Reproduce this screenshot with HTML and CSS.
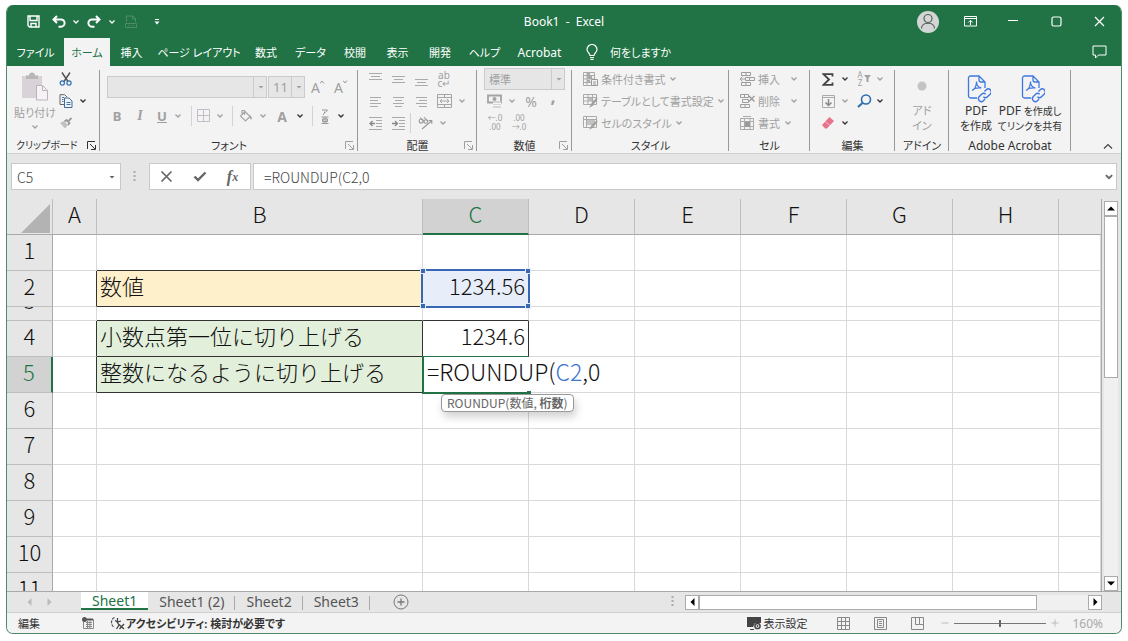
FILE: index.html
```html
<!DOCTYPE html>
<html lang="ja">
<head>
<meta charset="utf-8">
<title>Book1 - Excel</title>
<link rel="stylesheet" href="styles.css">
</head>
<body>
<svg class="sprite" aria-hidden="true">
  <symbol id="chev" viewBox="0 0 8 8"><path d="M1.500 2.500 4 5l2.500-2.500" fill="none" stroke="currentColor" stroke-width="1.300"/></symbol>
  <symbol id="tri" viewBox="0 0 8 8"><path d="M1.500 3h5L4 5.500z" fill="currentColor"/></symbol>
  <symbol id="launch" viewBox="0 0 9 9"><path d="M.5 8V.5H8M3 3l5 5M8.500 4v4.500H4" fill="none" stroke="currentColor"/></symbol>
  <symbol id="pdf" viewBox="0 0 26 28"><g fill="none" stroke="#3f78e0" stroke-width="1.300"><path d="M10 23H3.500A2 2 0 0 1 1.500 21V3A2 2 0 0 1 3.500 1H12l6 6v6M12 1v4a2 2 0 0 0 2 2h4"/><path d="M5 15.500c3-1.500 4.500-4.500 4.500-9M9.500 6.500c0 3.500 2 6 5 6.500M5 15.500c2-2.500 5.500-3 9.500-2.500" stroke-width="1.200"/><path d="m17.500 16.500 1.700-1.700a2.900 2.900 0 0 1 4.100 4.100l-2.800 2.800a2.900 2.900 0 0 1-4.100 0M18.700 19.300a2.900 2.900 0 0 0-4.100 0l-2.300 2.300a2.900 2.900 0 0 0 4.100 4.100l1.600-1.600" stroke-width="1.400"/></g></symbol>
</svg>

<div class="window">
  <header class="titlebar">
    <div class="quick">
      <button aria-label="上書き保存"><svg width="13" height="13" viewBox="0 0 13 13"><path d="M1 1h11v11H2.500L1 10.500zM3 1v4.500h7V1M4 12V8.500h5V12" fill="none" stroke="#fff" stroke-width="1.400"/></svg></button>
      <button aria-label="元に戻す"><svg width="14" height="13" viewBox="0 0 14 13"><path d="M5 1 1.500 4.500 5 8M1.500 4.500H9a3.600 3.600 0 0 1 0 7.200H6.500" fill="none" stroke="#fff" stroke-width="2"/></svg></button>
      <button aria-label="元に戻すの一覧"><svg width="8" height="8"><use href="#chev"/></svg></button>
      <button aria-label="やり直し"><svg width="14" height="13" viewBox="0 0 14 13"><path d="M9 1l3.500 3.500L9 8M12.500 4.500H5a3.600 3.600 0 0 0 0 7.200h2.500" fill="none" stroke="#fff" stroke-width="2"/></svg></button>
      <button aria-label="やり直しの一覧"><svg width="8" height="8"><use href="#chev"/></svg></button>
      <button aria-label="PDF"><svg width="12" height="14" viewBox="0 0 12 14"><path d="M1.500 7V1H8l2.500 2.500V7M7.500 1v3h3M.5 8.500h11v4H.5zM3 10.500h1m1.500 0h1M8 10.500h1" fill="none" stroke="#4c8c69"/></svg></button>
      <button aria-label="ツールバーのカスタマイズ"><svg width="8" height="8" viewBox="0 0 8 8"><path d="M2 1.500h4" stroke="#fff"/><path d="M1.500 3.500h5L4 6.500z" fill="#fff"/></svg></button>
    </div>
    <h1 class="title">Book1&nbsp; -&nbsp; Excel</h1>
    <div class="wincontrols">
      <button class="avatar" aria-label="アカウント"><svg width="22" height="22" viewBox="0 0 22 22"><circle cx="11" cy="11" r="11" fill="#d3d6d4"/><circle cx="11" cy="7.500" r="4" fill="none" stroke="#56605a" stroke-width="1.200"/><path d="M4.500 17.500c0-7 13-7 13 0" fill="none" stroke="#56605a" stroke-width="1.200"/></svg></button>
      <button aria-label="リボンの表示オプション"><svg width="13" height="11" viewBox="0 0 13 11"><path d="M.5.5h12v9.500H.5zM.5 2.500h12M6.500 9V4.500M4.300 6.500l2.200-2.200 2.200 2.200" fill="none" stroke="#fff"/></svg></button>
      <button aria-label="最小化"><svg width="11" height="11"><path d="M0 4.500h10" stroke="#fff"/></svg></button>
      <button aria-label="最大化"><svg width="11" height="11"><rect x="1" y="1" width="9" height="9" rx="1.500" fill="none" stroke="#fff" stroke-width="1.200"/></svg></button>
      <button aria-label="閉じる"><svg width="11" height="11"><path d="m1 1 9 9m0-9-9 9" stroke="#fff" stroke-width="1.200"/></svg></button>
    </div>
  </header>

  <nav class="tabs">
    <button>ファイル</button><button class="active">ホーム</button><button>挿入</button><button>ページ レイアウト</button><button>数式</button><button>データ</button><button>校閲</button><button>表示</button><button>開発</button><button>ヘルプ</button><button class="latin">Acrobat</button>
    <button class="tellme"><svg width="12" height="16" viewBox="0 0 12 16"><path d="M4 11.500C4 9 1 8.500 1 5.500a5 5 0 0 1 10 0c0 3-3 3.500-3 6zM4 13.500h4M4.500 15.300h3" fill="none" stroke="#fff" stroke-width="1.200"/></svg>何をしますか</button>
    <button class="comment" aria-label="コメント"><svg width="15" height="14" viewBox="0 0 15 14"><path d="M1 1h13v9H6.500L3.500 13v-3H1z" fill="none" stroke="#fff"/></svg></button>
  </nav>

  <section class="ribbon" aria-label="リボン">
    <div class="group g-clip">
      <div class="body">
        <button class="tall"><svg width="28" height="32" viewBox="0 0 28 32"><path d="M1 5h20v22H1z" fill="#d9d3d9"/><path d="M5 4.500h3c0-4 6-4 6 0h3V8H5z" fill="#b7b7b7"/><path d="M15.500 14.500h6l5 5V29h-11z" fill="#f6f3f6" stroke="#b9b4b9"/><path d="M21.500 14.500v5h5" fill="none" stroke="#b9b4b9"/></svg><span>貼り付け</span><svg width="8" height="8"><use href="#chev"/></svg></button>
        <div class="rows">
          <div><button aria-label="切り取り"><svg width="14" height="14" viewBox="0 0 14 14"><path d="m3 .5 6 9M11 .5 5 9.500" stroke="#555" stroke-width="1.500"/><circle cx="3.300" cy="11" r="2.100" fill="none" stroke="#2f6fb3" stroke-width="1.200"/><circle cx="10" cy="11" r="2.100" fill="none" stroke="#2f6fb3" stroke-width="1.200"/></svg></button></div>
          <div><button aria-label="コピー"><svg width="14" height="14" viewBox="0 0 14 14"><path d="M6 10.500H1V.7h4.500L8 3" fill="none" stroke="#666"/><path d="M5.500 4h4.500l3 3v6.500H5.500z" fill="#eef4fb" stroke="#47698e"/><path d="M3 3.500h2M3 5.500h1.500M3 7.500h1.500M7.500 8.500h4M7.500 10.500h4" stroke="#3877b8"/></svg></button><button class="dk" aria-label="コピーの一覧"><svg width="8" height="8"><use href="#chev"/></svg></button></div>
          <div><button aria-label="書式のコピー"><svg width="14" height="12" viewBox="0 0 14 12"><path d="m1 6 4-2 4 4-3 3.500z" fill="#c4bfc4"/><path d="m5.500 4.500 2-1.500 3 3-1.500 2M9 4.500l3.500-3.500" fill="none" stroke="#9b9b9b" stroke-width="1.800"/></svg></button></div>
        </div>
      </div>
      <h2>クリップボード</h2><svg class="launch dk" width="9" height="9"><use href="#launch"/></svg>
    </div>

    <div class="group g-font">
      <div class="body">
        <div class="fontrow1">
          <span class="combo"><select aria-label="フォント"><option></option></select><svg width="8" height="8"><use href="#tri"/></svg></span>
          <span class="combo"><select aria-label="フォント サイズ"><option>11</option></select><svg width="8" height="8"><use href="#tri"/></svg></span>
          <button class="big" aria-label="拡大">A<svg width="5" height="4"><path d="m0 3.500 2-2.500 2 2.500" stroke="#9b9b9b" fill="none"/></svg></button>
          <button class="big" aria-label="縮小">A<svg width="5" height="4"><path d="m0 .5 2 2.500L4 .5" stroke="#9b9b9b" fill="none"/></svg></button>
        </div>
        <div class="fontrow2">
          <button><b>B</b></button><button><i>I</i></button><button><u>U</u></button>
          <button aria-label="下線の種類"><svg width="8" height="8"><use href="#chev"/></svg></button><span class="sep"></span>
          <button aria-label="罫線"><svg width="14" height="14"><path d="M.5.5h12v12H.5zM6.500.5v12M.5 6.500h12" fill="none" stroke="#c6bcc9"/></svg></button>
          <button aria-label="罫線の種類"><svg width="8" height="8"><use href="#chev"/></svg></button><span class="sep"></span>
          <button aria-label="塗りつぶし"><svg width="14" height="14" viewBox="0 0 14 14"><path d="m6 2.500 5 5-4.500 4.500-5-5zM3 5V1.500h2.500V6" fill="none" stroke="#a5a5a5" stroke-width="1.200"/><path d="M11 6c2 2 2.500 4 1.200 4.500S10.500 8 11 6z" fill="#a5a5a5"/></svg></button>
          <button aria-label="塗りつぶしの色"><svg width="8" height="8"><use href="#chev"/></svg></button>
          <button><b class="fontcolor">A</b></button>
          <button class="dk" aria-label="文字の色"><svg width="8" height="8"><use href="#chev"/></svg></button><span class="sep"></span>
          <button aria-label="ふりがな"><svg width="8" height="15" viewBox="0 0 8 15"><path d="M1 1h5.500L4.500 3.500M3.500 2.500v1.500L2 6M.5 8h7M.5 14.500h7M1.500 10h5v2.500h-5zM3 8v6M5 8v6" fill="none" stroke="#999"/></svg></button>
          <button class="dk" aria-label="ふりがなの設定"><svg width="8" height="8"><use href="#chev"/></svg></button>
        </div>
      </div>
      <h2>フォント</h2><svg class="launch" width="9" height="9"><use href="#launch"/></svg>
    </div>

    <div class="group g-align">
      <div class="body">
        <button aria-label="上揃え"><svg width="13" height="13"><path d="M0 .5h13M2 3.500h9M0 6.500h13" stroke="#aaa"/></svg></button>
        <button aria-label="上下中央揃え"><svg width="13" height="13"><path d="M0 3.500h13M2 6.500h9M0 9.500h13" stroke="#aaa"/></svg></button>
        <button aria-label="下揃え"><svg width="13" height="13"><path d="M0 6.500h13M2 9.500h9M0 12.500h13" stroke="#aaa"/></svg></button>
        <button class="wrap">ab<br>c↵</button><span></span>
        <button aria-label="左揃え"><svg width="13" height="13"><path d="M1 2.500h11M1 5.500h8M1 8.500h11M1 11.500h8" stroke="#aaa"/></svg></button>
        <button aria-label="中央揃え"><svg width="13" height="13"><path d="M1 2.500h11M3 5.500h7M1 8.500h11M3 11.500h7" stroke="#aaa"/></svg></button>
        <button aria-label="右揃え"><svg width="13" height="13"><path d="M1 2.500h11M4 5.500h8M1 8.500h11M4 11.500h8" stroke="#aaa"/></svg></button>
        <button aria-label="セルを結合"><svg width="15" height="14"><path d="M.5.5h14v13H.5zM.5 3.500h14M.5 10.500h14M7.500.5v3M7.500 10.500v3M3 7h9M5 5 3 7l2 2M10 5l2 2-2 2" fill="none" stroke="#a5a5a5"/></svg></button>
        <button aria-label="結合の種類"><svg width="8" height="8"><use href="#chev"/></svg></button>
        <button aria-label="インデントを減らす"><svg width="14" height="13"><path d="M0 .5h13M7 3.500h6M7 6.500h6M7 9.500h6M0 12.500h13" fill="none" stroke="#aaa"/><path d="M1 6.500h5M3.500 4 1 6.500 3.500 9" fill="none" stroke="#888" stroke-width="1.300"/></svg></button>
        <button aria-label="インデントを増やす"><svg width="14" height="13"><path d="M0 .5h13M7 3.500h6M7 6.500h6M7 9.500h6M0 12.500h13" fill="none" stroke="#aaa"/><path d="M0 6.500h5M3 4l2.500 2.500L3 9" fill="none" stroke="#888" stroke-width="1.300"/></svg></button>
        <div class="orient"><span class="sep"></span><button aria-label="方向"><svg width="15" height="14" viewBox="0 0 15 14"><g fill="none" stroke="#999" stroke-width="1.100"><circle cx="3.200" cy="5" r="2"/><path d="M2 1.500 6 6M6 1l4 4.500"/><circle cx="7.800" cy="5.500" r="1.800"/><path d="m4 13 9.500-8M10.500 4.500h3.300v3.300"/></g></svg></button><button aria-label="方向の種類"><svg width="8" height="8"><use href="#chev"/></svg></button></div>
      </div>
      <h2>配置</h2><svg class="launch" width="9" height="9"><use href="#launch"/></svg>
    </div>

    <div class="group g-num">
      <div class="body">
        <span class="combo"><select aria-label="表示形式"><option>標準</option></select><svg width="8" height="8"><use href="#tri"/></svg></span>
        <div class="numrow"><button aria-label="通貨"><svg width="15" height="14" viewBox="0 0 15 14"><path d="M1 1.500h13v7H1z" fill="none" stroke="#a3a3a3" stroke-width="1.800"/><circle cx="7.500" cy="5" r="2" fill="#a3a3a3"/><path d="M6 7h8v7H6z" fill="#d9d2d9"/><path d="M6 9.500h8M6 11.500h8" stroke="#f5f5f5"/></svg></button><button aria-label="通貨の種類"><svg width="8" height="8"><use href="#chev"/></svg></button><button class="pct">%</button><button class="comma">,</button></div>
        <div class="numrow dec"><button><span>←.0<br>.00</span></button><button><span>.00<br>→.0</span></button></div>
      </div>
      <h2>数値</h2><svg class="launch" width="9" height="9"><use href="#launch"/></svg>
    </div>

    <div class="group g-style">
      <div class="body">
        <button class="cmd"><svg width="15" height="15"><path d="M.5.5h11v13H.5zM.5 3.500h11M.5 7h11M.5 10.500h11M4 .5v13" fill="none" stroke="#aaa"/><path d="M4 1h3v3H4zM4 4h5v3H4zM4 8h3v2H4z" fill="#aaa"/><path d="M8.500 7.500h6v6h-6zM10 10h3M10 12h3" fill="#f3f3f3" stroke="#999"/></svg>条件付き書式<svg width="8" height="8"><use href="#chev"/></svg></button>
        <button class="cmd"><svg width="15" height="15"><path d="M.5.5h13v10H.5zM.5 3.500h13M.5 7h13M5 .5v10M9.500.5v10" fill="none" stroke="#aaa"/><path d="M5 4h4v3H5z" fill="#bbb"/><path d="m14 3-5.500 6L6 14l4-2.500L14.500 5z" fill="#a1a1a1"/></svg>テーブルとして書式設定<svg width="8" height="8"><use href="#chev"/></svg></button>
        <button class="cmd"><svg width="15" height="15"><path d="M.5.5h13v11H.5zM.5 3.500h13M3.500.5v11" fill="none" stroke="#aaa"/><path d="M4 4h8v5H4z" fill="#c2c2c2"/><path d="m14 4-5.500 5L6 14l4-2.500L14.500 6z" fill="#a1a1a1"/></svg>セルのスタイル<svg width="8" height="8"><use href="#chev"/></svg></button>
      </div>
      <h2>スタイル</h2>
    </div>

    <div class="group g-cell">
      <div class="body">
        <button class="cmd"><svg width="15" height="15"><path d="M1.500.5h9v3h-9zM6 .5v3M5.500 5.500h9v3h-9zM9.500 5.500v3M5.500 7H0M2.500 4.500 0 7l2.500 2.500M1.500 10.500h9v3h-9zM6 10.500v3" fill="none" stroke="#9d9d9d"/></svg><span>挿入</span><svg width="8" height="8"><use href="#chev"/></svg></button>
        <button class="cmd"><svg width="15" height="15"><path d="M.5.5h8v3h-8zM4.500.5v3M2.500 5.500h6v3h-6zM.5 10.500h9v3h-9zM5 10.500v3" fill="none" stroke="#9d9d9d"/><path d="m9 2 5.500 5.500m0-5.500L9 7.500" stroke="#999" stroke-width="1.400"/></svg><span>削除</span><svg width="8" height="8"><use href="#chev"/></svg></button>
        <button class="cmd close"><svg width="15" height="15"><path d="M.5 2.500h13v11H.5zM.5 5.500h13M.5 10.500h13M4.500 2.500v11M10 2.500v11M3 .5h8" fill="none" stroke="#aaa"/><path d="M5 6h5v5H5z" fill="#999"/></svg><span>書式</span><svg width="8" height="8"><use href="#chev"/></svg></button>
      </div>
      <h2>セル</h2>
    </div>

    <div class="group g-edit">
      <div class="body">
        <button aria-label="合計"><svg width="12" height="13" viewBox="0 0 12 13"><path d="M10.500 3.500V1.200H1.500L7 6.500l-5.500 5.300h9V9.500" fill="none" stroke="#444" stroke-width="1.800"/></svg></button><button class="dk" aria-label="合計の種類"><svg width="8" height="8"><use href="#chev"/></svg></button>
        <button class="az"><span>A<br>Z</span><svg width="7" height="8"><path d="M0 0h7L4.500 3v4h-2V3z" fill="#a1a1a1"/></svg></button><button aria-label="並べ替え"><svg width="8" height="8"><use href="#chev"/></svg></button>
        <button aria-label="フィル"><svg width="13" height="13"><path d="M.5.5h12v12H.5zM.5 2.500h12" fill="none" stroke="#aaa"/><path d="M6.500 4v6.500M3.500 7.500l3 3 3-3" fill="none" stroke="#888" stroke-width="1.500"/></svg></button><button aria-label="フィルの種類"><svg width="8" height="8"><use href="#chev"/></svg></button>
        <button aria-label="検索と選択"><svg width="15" height="14"><circle cx="9" cy="5.500" r="4.500" fill="none" stroke="#2d6cae" stroke-width="1.600"/><path d="M5.500 9 1 13" stroke="#2d6cae" stroke-width="2"/></svg></button><button class="dk" aria-label="検索の種類"><svg width="8" height="8"><use href="#chev"/></svg></button>
        <button aria-label="クリア"><svg width="14" height="14"><path d="m8.500 1 4.500 4L6 12.500H4L1 9z" fill="#e6738b"/><path d="m4 5.500 5 4" stroke="#f6b4c0"/></svg></button><button class="dk" aria-label="クリアの種類"><svg width="8" height="8"><use href="#chev"/></svg></button>
      </div>
      <h2>編集</h2>
    </div>

    <div class="group g-addin">
      <div class="body"><button class="tall"><svg width="28" height="32"><circle cx="14" cy="15" r="4.500" fill="#c4c4c4"/></svg><span>アド<br>イン</span></button></div>
      <h2>アドイン</h2>
    </div>

    <div class="group g-acro">
      <div class="body">
        <button class="tall dk"><svg width="24" height="32" viewBox="0 -4 24 32"><use href="#pdf" width="26" height="28"/></svg><span><span class="latin">PDF</span><br>を作成</span></button>
        <button class="tall dk"><svg width="24" height="32" viewBox="0 -4 24 32"><use href="#pdf" width="26" height="28"/></svg><span class="small"><span class="latin">PDF</span> を作成し<br>てリンクを共有</span></button>
      </div>
      <h2 class="latin">Adobe Acrobat</h2>
    </div>
    <button class="collapse" aria-label="リボンを折りたたむ"><svg width="10" height="7"><path d="m1 5.500 4-4 4 4" fill="none" stroke="#444" stroke-width="1.200"/></svg></button>
  </section>

  <div class="formulabar">
    <span class="namebox"><input value="C5" aria-label="名前ボックス"><svg width="8" height="8"><use href="#tri"/></svg></span>
    <svg class="grip" width="3" height="12"><path d="M1.500 0v12" stroke="#aaa" stroke-width="2" stroke-dasharray="2 2"/></svg>
    <div class="fx">
      <button aria-label="キャンセル"><svg width="13" height="11"><path d="m1.500.5 10 10m0-10-10 10" stroke="#666" stroke-width="1.600"/></svg></button>
      <button aria-label="入力"><svg width="14" height="11"><path d="M1.500 5.500 5 9l7.500-7.500" fill="none" stroke="#666" stroke-width="2.400"/></svg></button>
      <button class="fxi">f<small>x</small></button>
    </div>
    <span class="formula"><input value="=ROUNDUP(C2,0" aria-label="数式バー"><svg width="10" height="10" viewBox="0 0 8 8"><path d="M1.500 2.500 4 5l2.500-2.500" fill="none" stroke="#666" stroke-width="1.500"/></svg></span>
  </div>

  <main class="sheet">
    <div class="gridwrap">
      <table class="grid">
        <colgroup><col class="c-head"><col class="c-a"><col class="c-b"><col class="c-n"><col class="c-n"><col class="c-n"><col class="c-n"><col class="c-n"><col class="c-n"><col></colgroup>
        <thead><tr><th class="corner"><svg width="29" height="29"><path d="M29 0v29H0z" fill="#b3b3b3"/></svg></th><th>A</th><th>B</th><th class="sel">C</th><th>D</th><th>E</th><th>F</th><th>G</th><th>H</th><th></th></tr></thead>
        <tbody>
          <tr><th>1</th><td></td><td class="bb"></td><td></td><td></td><td></td><td></td><td></td><td></td><td></td></tr>
          <tr><th>2</th><td class="br"></td><td class="label yellow bb br">数値</td><td class="num ref">1234.56<span class="refbox"><i></i><i></i><i></i><i></i></span></td><td></td><td></td><td></td><td></td><td></td><td></td></tr>
          <tr class="short"><th><div>3</div></th><td></td><td class="bb"></td><td class="bb"></td><td></td><td></td><td></td><td></td><td></td><td></td></tr>
          <tr><th>4</th><td class="br"></td><td class="label green bb br">小数点第一位に切り上げる</td><td class="num bb br">1234.6</td><td></td><td></td><td></td><td></td><td></td><td></td></tr>
          <tr><th class="sel">5</th><td class="br"></td><td class="label green bb br">整数になるように切り上げる</td><td class="edit" colspan="2"><span class="cursorbox"></span>=ROUNDUP(<span class="blue">C2</span>,0<span class="tip" role="tooltip">ROUNDUP(数値, <b>桁数</b>)</span></td><td></td><td></td><td></td><td></td><td></td></tr>
          <tr><th>6</th><td></td><td></td><td></td><td></td><td></td><td></td><td></td><td></td><td></td></tr>
          <tr><th>7</th><td></td><td></td><td></td><td></td><td></td><td></td><td></td><td></td><td></td></tr>
          <tr><th>8</th><td></td><td></td><td></td><td></td><td></td><td></td><td></td><td></td><td></td></tr>
          <tr><th>9</th><td></td><td></td><td></td><td></td><td></td><td></td><td></td><td></td><td></td></tr>
          <tr><th>10</th><td></td><td></td><td></td><td></td><td></td><td></td><td></td><td></td><td></td></tr>
          <tr><th>11</th><td></td><td></td><td></td><td></td><td></td><td></td><td></td><td></td><td></td></tr>
        </tbody>
      </table>
    </div>
    <div class="vscroll">
      <button aria-label="上へ"><svg width="8" height="5"><path d="M0 4.500h8L4 .5z"/></svg></button>
      <div class="track"><div class="thumb"></div></div>
      <button aria-label="下へ"><svg width="8" height="5"><path d="M0 .5h8L4 4.500z"/></svg></button>
    </div>
  </main>

  <div class="sheetbar">
    <div class="sheetnav"><button aria-label="前のシート"><svg width="5" height="8"><path d="M4.500 0v8L.5 4z" fill="#bbb"/></svg></button><button aria-label="次のシート"><svg width="5" height="8"><path d="M.5 0v8l4-4z" fill="#bbb"/></svg></button></div>
    <div class="sheettabs"><button class="active">Sheet1</button><button>Sheet1 (2)</button><button>Sheet2</button><button>Sheet3</button></div>
    <button class="add" aria-label="新しいシート"><svg width="16" height="16"><circle cx="8" cy="8" r="7" fill="none" stroke="#777"/><path d="M4.500 8h7M8 4.500v7" stroke="#777" stroke-width="1.300"/></svg></button>
    <svg class="grip" width="3" height="12"><path d="M1.500 0v12" stroke="#aaa" stroke-width="2" stroke-dasharray="2 2"/></svg>
    <div class="hscroll">
      <button aria-label="左へ"><svg width="5" height="8"><path d="M4.500 0v8L.5 4z"/></svg></button>
      <div class="track"><div class="thumb"></div></div>
      <button aria-label="右へ"><svg width="5" height="8"><path d="M.5 0v8l4-4z"/></svg></button>
    </div>
  </div>

  <footer class="status">
    <span class="mode">編集</span>
    <button aria-label="マクロの記録"><svg width="12" height="12"><path d="M1.500 2.500h10v9h-10zM4 5.500h6M4 7.500h6M4 9.500h6M5.500 4v7M8 4v7" fill="none" stroke="#888"/><circle cx="2.500" cy="2.500" r="2.500" fill="#555"/><path d="M5 2.500h6" stroke="#555" stroke-width="2"/></svg></button>
    <button class="access"><svg width="15" height="14" viewBox="0 0 15 14"><path d="M4.500 1.500C.5 3 .5 9.500 4.500 11.500" fill="none" stroke="#555" stroke-width="1.200" stroke-dasharray="3 1"/><path d="M5 4.500 7.500 6 11 5M7.500 2v4.500L9 9l-2.500 4M9 8.500l5 4.500M14 8l-4.500 5" fill="none" stroke="#444" stroke-width="1.300"/></svg>アクセシビリティ: 検討が必要です</button>
    <button class="display"><svg width="15" height="13" viewBox="0 0 15 13"><path d="M0 0h14v6H8l-2 4H0z" fill="#444"/><path d="M3 12.500h4" stroke="#444"/><circle cx="10.500" cy="9" r="2.600" fill="#f3f3f3" stroke="#444" stroke-width="1.500"/><circle cx="10.500" cy="9" r=".9" fill="#444"/></svg>表示設定</button>
    <div class="views">
      <button aria-label="標準"><svg width="13" height="13"><path d="M.5.5h12v12H.5zM.5 4.500h12M.5 8.500h12M4.500.5v12M8.500.5v12" fill="none" stroke="#888"/></svg></button>
      <button aria-label="ページ レイアウト"><svg width="13" height="13"><path d="M.5.5h12v12H.5zM3.500 2.500h6v8h-6zM5 4.500h3M5 6.500h3M5 8.500h3" fill="none" stroke="#888"/></svg></button>
      <button aria-label="改ページ プレビュー"><svg width="13" height="13"><path d="M.5.5h12v12H.5zM4.500.5v7h4v-7M8.500 7.500h4" fill="none" stroke="#888"/></svg></button>
    </div>
    <button class="zm" aria-label="縮小"><svg width="8" height="8"><path d="M.5 4h7" stroke="#bbb"/></svg></button>
    <input class="zoom" type="range" value="50" aria-label="ズーム">
    <button class="zm" aria-label="拡大"><svg width="8" height="8"><path d="M.5 4h7M4 .5v7" stroke="#bbb"/></svg></button>
    <span class="pctv">160%</span>
  </footer>
</div>
</body>
</html>
```
FILE: styles.css
```css
* { box-sizing: border-box; }
body {
  margin: 0;
  height: 100vh;
  padding: 5px 6px 7px;
  background: #fff;
  color: #333;
  font: 11px/15px "Noto Sans", "Noto Sans CJK JP", sans-serif;
  font-feature-settings: "palt";
}
button, input, select { font: inherit; font-feature-settings: inherit; color: inherit; }
button {
  display: flex;
  align-items: center;
  justify-content: center;
  margin: 0;
  padding: 0;
  border: 0;
  background: none;
  white-space: nowrap;
}
svg { display: block; flex: none; }
h1, h2 { margin: 0; font: inherit; }
.sprite { position: absolute; width: 0; height: 0; }
.latin { font-size: 12px; }
.small { font-size: 10px; }
.dk { color: #333; }

.window {
  display: flex;
  flex-direction: column;
  height: 100%;
  min-height: 400px;
  border: 1px solid #4f8a6b;
  border-top: 0;
  border-radius: 7px;
  overflow: hidden;
  background: #e6e6e6;
}

/* Title bar */
.titlebar {
  display: grid;
  grid-template-columns: 1fr auto 1fr;
  align-items: center;
  height: 33px;
  background: #217346;
  color: #fff;
}
.quick { display: grid; grid-template-columns: 26px 26px 8px 28px 8px 30px 22px; padding-left: 13px; align-items: center; }
.title { font-size: 12px; }
.wincontrols { display: flex; justify-content: flex-end; align-items: center; }
.wincontrols button { width: 43px; height: 28px; }

/* Ribbon tabs */
.tabs {
  display: grid;
  grid-template-columns: 57px 46px 43px 92px 42px 47px 42px 43px 42px 47px 63px auto 1fr;
  height: 28px;
  background: #217346;
  color: #fff;
}
.tabs .active { background: #f3f3f3; color: #217346; }
.tellme { gap: 12px; padding-left: 15px; }
.comment { justify-self: end; padding-right: 14px; }

/* Ribbon */
.ribbon {
  display: flex;
  height: 88px;
  background: #f3f3f3;
  border-bottom: 1px solid #d0d0d0;
  color: #a0a0a0;
}
.group {
  display: grid;
  grid-template-columns: 1fr;
  grid-template-rows: 71px 15px;
  padding-top: 1px;
  flex: none;
  position: relative;
}
.group::after { content: ""; position: absolute; right: 0; top: 4px; bottom: 2px; width: 1px; background: #999; }
.group h2 { text-align: center; color: #333; grid-area: 2 / 1; }
.launch { grid-area: 2 / 1; justify-self: end; align-self: center; margin-right: 4px; }
.body { padding-top: 1px; grid-area: 1 / 1; }
.g-clip { width: 93px; }
.g-font { width: 258px; }
.g-align { width: 119px; }
.g-num { width: 95px; }
.g-style { width: 157px; }
.g-cell { width: 81px; }
.g-edit { width: 85px; }
.g-addin { width: 54px; }
.g-acro { width: 122px; }

.g-clip h2 { text-align: left; padding-left: 9px; font-size: 10px; }
.g-clip .body { display: flex; }
.tall { flex-direction: column; justify-content: flex-start; align-self: flex-start; padding-top: 3px; }
.tall > span { text-align: center; }
.g-clip .tall { width: 46px; padding-left: 10px; }
.g-clip .tall span { line-height: 20px; }
.rows { padding-left: 5px; }
.rows > div { display: flex; height: 22px; }
.rows button:first-child { width: 16px; }
.rows button + button { width: 18px; }

.combo { display: grid; height: 22px; }
.combo select {
  grid-area: 1 / 1;
  width: 100%;
  padding: 0 4px;
  appearance: none;
  background: linear-gradient(90deg, #cbcbcb, #cbcbcb) right 12px top 0 / 1px 100% no-repeat #e6e6e6;
  border: 1px solid #cbcbcb;
  border-radius: 0;
  color: #a0a0a0;
  opacity: 1;
}
.combo svg { grid-area: 1 / 1; justify-self: end; align-self: center; margin-right: 2px; pointer-events: none; }

.g-font .body { padding: 9px 0 0 7px; }
.fontrow1 { display: grid; grid-template-columns: 160px 37px 24px 20px; column-gap: 1px; }
.fontrow1 select { font-size: 13px; }
.fontrow1 .big { font-size: 14px; align-items: center; }
.big svg { align-self: flex-start; margin-top: 4px; }
.fontrow2 {
  display: grid;
  grid-template-columns: 20px 26px 18px 14px 12px 14px 18px 6px 22px 12px 26px 10px 14px 12px 20px;
  height: 22px;
  margin-top: 7px;
  font-size: 13px;
}
.fontrow2 i { font: italic bold 14px "Liberation Serif", serif; }
.fontrow2 u { font-weight: bold; }
.fontcolor { font-size: 14px; }
.sep { justify-self: center; align-self: center; width: 1px; height: 20px; background: #d2d2d2; }

.g-align .body { display: grid; grid-template: repeat(3, 22px) / 23px 23px 23px 22px 14px; padding-left: 6px; }
.wrap { font-size: 10px; line-height: 8px; }
.orient { display: flex; grid-column: 3 / 6; }
.orient button:nth-child(2) { width: 28px; }

.g-num .body { padding-left: 7px; }
.g-num .combo { width: 81px; }
.numrow { display: grid; grid-template-columns: 20px 16px 22px 22px; height: 22px; }
.pct { font-size: 14px; }
.comma { font-size: 18px; font-weight: bold; line-height: 10px; padding-bottom: 10px; }
.numrow.dec { grid-template-columns: 22px 26px; font-size: 8px; line-height: 9px; text-align: right; }
.dec button { height: 20px; }

.cmd { height: 22px; gap: 3px; }
.g-style .body { padding-left: 11px; }
.g-cell .body { padding-left: 11px; }
.g-cell .cmd svg:last-child { margin-left: 7px; }
.g-cell .close svg:last-child { margin-left: 1px; }

.g-edit .body { display: grid; grid-template: repeat(3, 22px) / 18px 16px 22px 10px; padding-left: 9px; }
.az { font-size: 8px; line-height: 8px; gap: 1px; }
.g-addin .body { display: flex; justify-content: center; }
.g-acro .body { display: flex; }
.g-acro .tall:first-child { width: 54px; }
.g-acro .tall:last-child { width: 54px; }
.g-acro .tall > svg { margin-left: 6px; }
.collapse { margin-left: auto; align-self: flex-end; padding: 0 8px 3px; }

/* Formula bar */
.formulabar { display: flex; align-items: center; height: 45px; padding: 0 4px; flex: none; }
.namebox, .formula { display: flex; align-items: center; height: 27px; border: 1px solid #c9c9c9; background: #fff; }
.namebox { width: 110px; padding-right: 4px; color: #666; }
.formulabar input {
  flex: 1;
  min-width: 0;
  height: 25px;
  padding: 0 5px;
  border: 0;
  background: none;
  color: #444;
  font: 300 14px "Noto Sans CJK JP", sans-serif;
}
.formula { flex: 1; padding-right: 2px; margin-left: 2px; }
.formula input { padding-left: 10px; }
.formulabar .grip { margin: 0 13px 0 12px; }
.fx { display: grid; grid-template-columns: repeat(3, 33px); padding-right: 1px; height: 27px; border: 1px solid #c9c9c9; background: #fff; }
.fxi { font: italic bold 16px "Liberation Serif", serif; color: #666; }
.fxi small { font-size: 12px; align-self: flex-end; padding-bottom: 4px; }

/* Worksheet */
.sheet { display: flex; flex: 1; min-height: 0; }
.gridwrap { flex: 1; min-width: 0; overflow: hidden; background: #fff; border-right: 1px solid #a9a9a9; }
.grid {
  width: 100%;
  table-layout: fixed;
  border-spacing: 0;
  color: #111;
  font: 300 22px/28px "Noto Sans CJK JP", sans-serif;
  font-feature-settings: normal;
}
.c-head { width: 46px; }
.c-a { width: 44px; }
.c-b { width: 326px; }
.c-n { width: 106px; }
.grid tr { height: 36px; }
.grid th, .grid td { padding: 0 0 7px; border: solid #d9d9d9; border-width: 0 1px 1px 0; }
.grid th { background: #e6e6e6; border-color: #bebebe; font-weight: 300; }
.grid thead th { border-bottom-color: #a9a9a9; }
.grid thead th:last-child { border-right: 0; }
.grid tbody th { border-right-color: #a9a9a9; }
.grid thead .sel { background: #d2d2d2; color: #217346; border-bottom: 2px solid #217346; padding-bottom: 6px; }
.grid tbody .sel { background: #d2d2d2; color: #217346; border-right: 2px solid #217346; }
.grid .corner { padding: 0; }
.grid .corner svg { margin: 3px 0 0 14px; }
.grid .short { height: 14px; }
.grid .short > * { padding: 0; }
.short div { display: flex; align-items: flex-end; justify-content: center; height: 13px; overflow: hidden; line-height: 42px; }
.grid .bb { border-bottom-color: #333; }
.grid .br { border-right-color: #333; }
.grid .label { padding-left: 3px; white-space: nowrap; }
.grid .num { padding-right: 3px; text-align: right; }
.yellow { background: #fff0cc; }
.green { background: #e2efda; }
.ref { position: relative; background: #e8eef9; }
.refbox { position: absolute; inset: -2px; border: 2px solid #3767b5; }
.refbox i { position: absolute; width: 4px; height: 4px; background: #3767b5; outline: 1px solid #e8eef9; }
.refbox i:nth-child(1) { left: -2px; top: -2px; }
.refbox i:nth-child(2) { right: -2px; top: -2px; }
.refbox i:nth-child(3) { left: -2px; bottom: -2px; }
.refbox i:nth-child(4) { right: -2px; bottom: -2px; }
.grid .edit { position: relative; padding-left: 4px; white-space: nowrap; font-size: 23px; }
.blue { color: #3f74cf; }
.cursorbox { position: absolute; left: -1px; top: -1px; width: 107px; height: 38px; border: solid #217346; border-width: 1px 0 2px 2px; }
.cursorbox::after { content: ""; position: absolute; right: -2px; bottom: -3px; width: 4px; height: 4px; background: #217346; }
.tip {
  position: absolute;
  left: 18px;
  top: 37px;
  z-index: 1;
  padding: 0 5px;
  border: 1px solid #999;
  border-radius: 4px;
  background: #fff;
  box-shadow: 2px 5px 8px rgba(0, 0, 0, .18);
  color: #666;
  font: 12px/16px "Noto Sans CJK JP", sans-serif;
}

.vscroll { display: flex; flex-direction: column; width: 19px; padding: 2px 3px 0 2px; }
.vscroll button, .hscroll button { width: 14px; height: 15px; flex: none; border: 1px solid #ababab; background: #fff; }
.vscroll .track { flex: 1; background: #f0f0f0; }
.vscroll .thumb { width: 14px; height: 45%; border: 1px solid #ababab; background: #fff; }

/* Sheet tabs */
.sheetbar { display: flex; align-items: center; height: 21px; flex: none; border-top: 1px solid #a9a9a9; padding-right: 19px; }
.sheetnav { display: flex; width: 74px; padding-left: 20px; gap: 15px; }
.sheettabs { display: flex; align-self: stretch; font-size: 14px; color: #555; }
.sheettabs button { height: 18px; padding: 0 11px; position: relative; }
.sheettabs button + button::after { content: ""; position: absolute; right: 0; top: 4px; height: 14px; width: 1px; background: #aaa; }
.sheettabs .active { background: #fff; color: #217346; border-bottom: 2px solid #217346; }
.add { margin-left: 23px; }
.sheetbar .grip { margin-left: auto; }
.hscroll { display: flex; width: 417px; margin-left: 11px; }
.hscroll .track { flex: 1; background: #f0f0f0; }
.hscroll .thumb { height: 15px; width: 87%; border: 1px solid #ababab; background: #fff; }

/* Status bar */
.status { display: flex; align-items: center; height: 21px; flex: none; padding: 0 18px 0 11px; background: #f3f3f3; border-top: 1px solid #d0d0d0; }
.mode { width: 64px; }
.access { margin-left: 16px; gap: 1px; font-weight: bold; }
.display { margin-left: auto; gap: 1px; }
.views { display: flex; gap: 24px; margin: 0 17px 0 30px; }
.zoom { width: 92px; height: 11px; margin: 0 5px; appearance: none; background: linear-gradient(#777, #777) center / 100% 1px no-repeat; }
.zoom::-webkit-slider-thumb { appearance: none; width: 2px; height: 7px; background: #666; }
.pctv { margin-left: 13px; color: #aaa; font-size: 12px; }
```
